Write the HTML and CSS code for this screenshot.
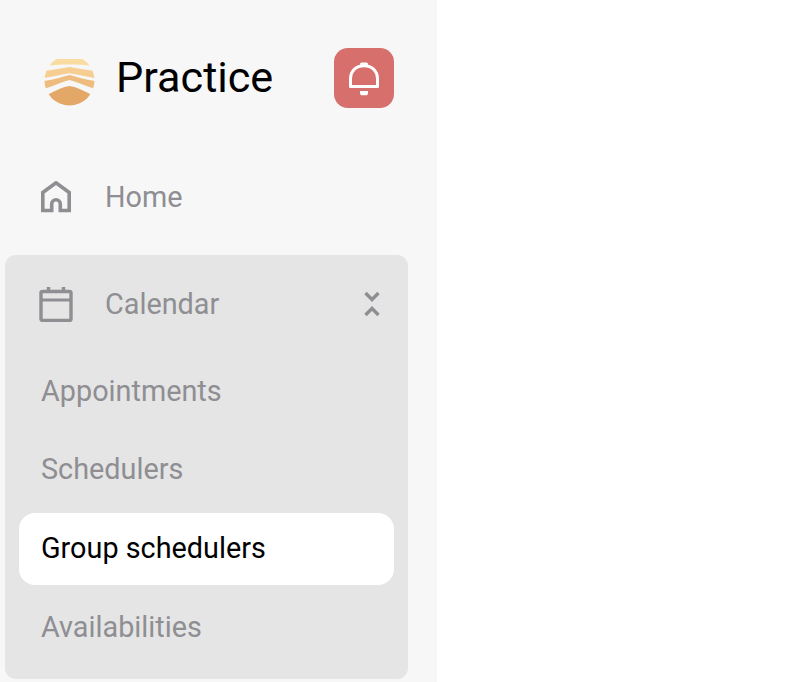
FILE: index.html
```html
<!DOCTYPE html>
<html lang="en">
<head>
<meta charset="utf-8">
<title>Practice</title>
<link rel="stylesheet" href="styles.css">
</head>
<body>
<aside class="sidebar">
  <header class="brand">
    <div class="brand-left">
      <svg class="logo" width="51" height="48" viewBox="0 0 51 48">
        <defs><clipPath id="disc"><circle cx="25.500" cy="22.500" r="25"/></clipPath></defs>
        <g clip-path="url(#disc)">
          <path d="M5 1H46V7.500C36 6 15 6 5 7.500Z" fill="#fadca0"/>
          <path d="M0 13C10 11.500 18 10.500 25.500 9C33 10.500 41 11.500 51 13V20C41 18 33 16.500 25.500 15.200C18 16.500 10 18 0 20Z" fill="#f6ce92"/>
          <path d="M0 23C10 21.500 18 19 25.500 17C33 19 41 21.500 51 23V31C41 27.500 33 24 25.500 22C18 24 10 27.500 0 31Z" fill="#efbc7f"/>
          <path d="M4 36.500C12 32 19 29 25.500 28C32 29 39 32 47 36.500V50H4Z" fill="#e3a768"/>
        </g>
      </svg>
      <span class="brand-name">Practice</span>
    </div>
    <button class="bell" type="button" aria-label="Notifications">
      <svg width="60" height="60" viewBox="0 0 60 60" fill="none">
        <path d="M16.500 38.500V31C16.500 23 22 17.800 30 17.800C38 17.800 43.500 23 43.500 31V38.500Z" stroke="#fff" stroke-width="3" stroke-linejoin="round"/>
        <path d="M27.500 16H32.500" stroke="#fff" stroke-width="3" stroke-linecap="round"/>
        <path d="M26 43H34V45C34 46.500 33 47.300 32 47.300H28C27 47.300 26 46.500 26 45Z" fill="#fff"/>
      </svg>
    </button>
  </header>

  <nav class="nav">
    <a class="row home">
      <svg class="icon" width="30" height="32" viewBox="0 0 30 32" fill="none">
        <path d="M1.800 29.500V11.500L15 1.800L28.200 11.500V29.500H19.300V23A4.300 4.300 0 0 0 10.700 23V29.500Z" stroke="#8e8e93" stroke-width="3.600"/>
      </svg>
      <span>Home</span>
    </a>
    <section class="group">
      <div class="row group-head">
        <svg class="icon" width="34" height="36" viewBox="0 0 34 36" fill="none">
          <rect x="2" y="5.500" width="30" height="29" rx="1.500" stroke="#8e8e93" stroke-width="3.400"/>
          <path d="M2 14H32" stroke="#8e8e93" stroke-width="3"/>
          <path d="M9.500 1V6M24.500 1V6" stroke="#8e8e93" stroke-width="3.500"/>
        </svg>
        <span class="group-title">Calendar</span>
        <svg class="chevrons" width="16" height="26" viewBox="0 0 16 26" fill="none">
          <path d="M1.500 2L8 8.500L14.500 2M1.500 24L8 17.500L14.500 24" stroke="#8e8e93" stroke-width="3.400"/>
        </svg>
      </div>
      <a class="item">Appointments</a>
      <a class="item">Schedulers</a>
      <a class="item active">Group schedulers</a>
      <a class="item">Availabilities</a>
    </section>
  </nav>
</aside>
</body>
</html>
```
FILE: styles.css
```css
html, body {
  margin: 0;
  height: 100%;
  background: #fff;
}

body {
  font-family: Roboto, "Liberation Sans", sans-serif;
  overflow: hidden;
}

.sidebar {
  width: 437px;
  height: 682px;
  box-sizing: border-box;
  background: #f7f7f7;
  padding: 48px 29px 0 5px;
}

.brand {
  display: flex;
  align-items: center;
  justify-content: space-between;
  height: 60px;
  padding-left: 39px;
  padding-right: 14px;
  margin-bottom: 73px;
}

.brand-left {
  display: flex;
  align-items: center;
  gap: 21px;
}

.logo {
  display: block;
  margin-top: 8px;
}

.brand-name {
  font-size: 43.2px;
  line-height: 60px;
  color: #000;
}

.bell {
  width: 60px;
  height: 60px;
  padding: 0;
  border: 0;
  border-radius: 14px;
  background: #d76f6c;
  display: flex;
  align-items: center;
  justify-content: center;
}

.nav {
  display: flex;
  flex-direction: column;
  gap: 42px;
}

.row {
  display: flex;
  align-items: center;
  font-size: 28.8px;
  color: #8e8e93;
}

.home {
  height: 32px;
  padding-left: 36px;
}

.home .icon {
  margin-right: 34px;
}

.home span {
  line-height: 32px;
}

.group {
  background: #e5e5e5;
  border-radius: 11px;
  width: 403px;
  height: 424px;
  box-sizing: border-box;
  padding: 13px 14px 15px;
  display: flex;
  flex-direction: column;
  gap: 7px;
}

.group-head {
  height: 72px;
  margin-bottom: 9px;
  padding-left: 20px;
  padding-right: 14px;
}

.group-head .icon {
  margin-right: 32px;
}

.group-title {
  flex: 1;
}

.item {
  display: flex;
  align-items: center;
  height: 72px;
  box-sizing: border-box;
  padding-left: 22px;
  padding-bottom: 2px;
  border-radius: 16px;
  font-size: 28.8px;
  color: #8e8e93;
}

.item.active {
  background: #fff;
  color: #000;
}
```
